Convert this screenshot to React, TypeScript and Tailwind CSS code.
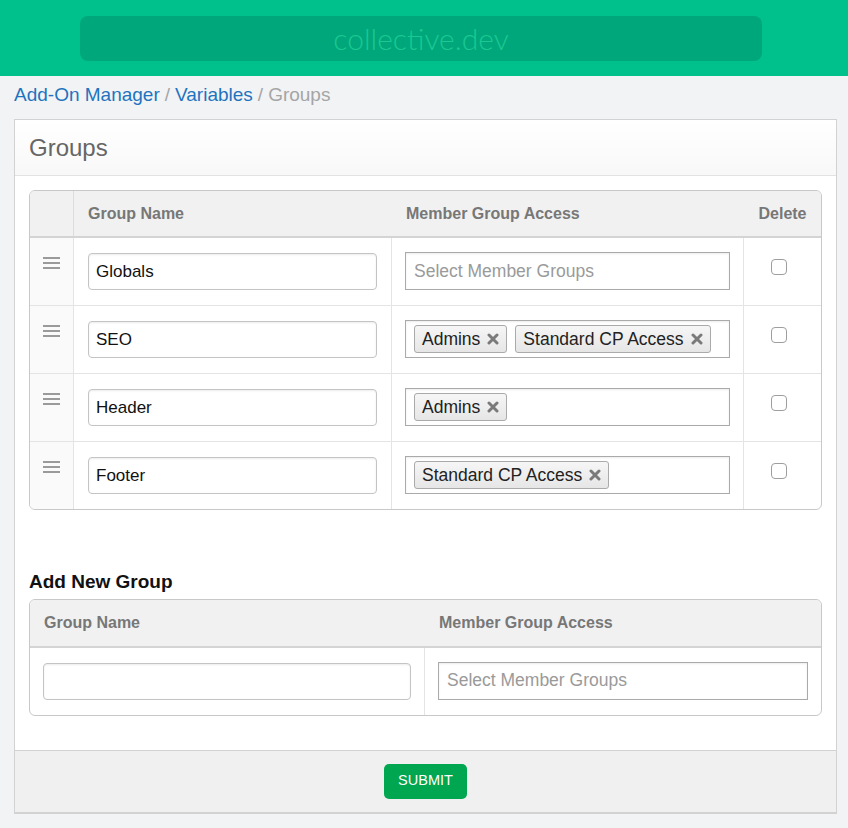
import React from "react";

const font = { fontFamily: '"Liberation Sans", Arial, Helvetica, sans-serif' };

function DragHandle() {
  return (
    <svg width="17" height="14" viewBox="0 0 17 14" className="block">
      <rect x="0" y="1" width="17" height="2" fill="#9a9a9a" />
      <rect x="0" y="6" width="17" height="2" fill="#9a9a9a" />
      <rect x="0" y="11" width="17" height="2" fill="#9a9a9a" />
    </svg>
  );
}

function Tag({ label }: { label: string }) {
  return (
    <span className="flex h-[28px] items-center gap-[7px] rounded-[3px] border border-[#aaaaaa] bg-gradient-to-b from-[#f6f6f6] to-[#e6e6e6] px-[7px] text-[17.5px] text-[#222]">
      {label}
      <svg width="12" height="12" viewBox="0 0 12 12" className="block">
        <path d="M2 2 L10 10 M10 2 L2 10" stroke="#7a7a7a" strokeWidth="3" strokeLinecap="round" />
      </svg>
    </span>
  );
}

function Checkbox() {
  return <span className="block h-[16px] w-[16px] rounded-[4px] border border-[#9e9e9e] bg-white" />;
}

function NameInput({ value }: { value: string }) {
  return (
    <div className="flex h-[37px] items-center rounded-[4px] border border-[#c4c4c4] bg-white px-[7px] text-[17px] text-[#111] shadow-[inset_0_1px_2px_rgba(0,0,0,0.08)]">
      {value}
    </div>
  );
}

function MemberSelect({ tags }: { tags: string[] }) {
  return (
    <div className="flex h-[38px] items-center gap-[8px] border border-[#aaaaaa] bg-white px-[8px] shadow-[inset_0_1px_2px_rgba(0,0,0,0.08)]">
      {tags.length === 0 ? (
        <span className="text-[17.5px] text-[#9a9a9a]">Select Member Groups</span>
      ) : (
        tags.map((t) => <Tag key={t} label={t} />)
      )}
    </div>
  );
}

const rows = [
  { name: "Globals", tags: [] as string[] },
  { name: "SEO", tags: ["Admins", "Standard CP Access"] },
  { name: "Header", tags: ["Admins"] },
  { name: "Footer", tags: ["Standard CP Access"] },
];

export default function App() {
  return (
    <div className="min-h-[828px] bg-[#f2f3f5]" style={font}>
      {/* top bar */}
      <div className="flex h-[76px] items-center bg-[#00c08b] pl-[80px]">
        <div
          className="flex h-[45px] w-[682px] items-center justify-center rounded-[8px] bg-[#00a77a] text-[30px] text-[#1bc893]"
          style={{ fontFamily: '"Lato", "Open Sans", sans-serif', fontWeight: 300 }}
        >
          collective.dev
        </div>
      </div>

      {/* breadcrumb */}
      <div className="flex h-[39px] items-center px-[14px] text-[19px] text-[#a5a5a5]">
        <span className="text-[#1f73bf]">Add-On Manager</span>
        <span className="px-[5px]">/</span>
        <span className="text-[#1f73bf]">Variables</span>
        <span className="px-[5px]">/</span>
        <span>Groups</span>
      </div>

      {/* panel */}
      <div className="ml-[14px] mt-[4px] w-[823px] border border-b-2 border-[#d2d2d2] bg-white">
        <div className="flex h-[56px] items-center border-b border-[#e2e2e2] bg-gradient-to-b from-white to-[#f8f8f8] px-[14px] text-[24px] text-[#666]">
          Groups
        </div>

        <div className="px-[14px] pb-[34px] pt-[14px]">
          {/* groups table */}
          <div className="overflow-hidden rounded-[6px] border border-[#c8c8c8]">
            <div className="grid h-[47px] grid-cols-[44px_318px_352px_1fr] border-b-2 border-[#d4d4d4] bg-[#f1f1f1] text-[16px] font-bold text-[#777]">
              <div className="border-r border-[#dcdcdc]" />
              <div className="flex items-center px-[14px]">Group Name</div>
              <div className="flex items-center px-[14px]">Member Group Access</div>
              <div className="flex items-center justify-center">Delete</div>
            </div>
            {rows.map((r, i) => (
              <div
                key={r.name}
                className={`grid grid-cols-[44px_318px_352px_1fr] ${i < rows.length - 1 ? "border-b border-[#e4e4e4]" : ""}`}
              >
                <div className="flex justify-center border-r border-[#e4e4e4] bg-[#fafafa] pt-[18px]">
                  <DragHandle />
                </div>
                <div className="border-r border-[#e4e4e4] px-[14px] py-[15px]">
                  <NameInput value={r.name} />
                </div>
                <div className="border-r border-[#e4e4e4] px-[13px] py-[14px]">
                  <MemberSelect tags={r.tags} />
                </div>
                <div className="flex justify-center pr-[8px] pt-[21px]">
                  <Checkbox />
                </div>
              </div>
            ))}
          </div>

          {/* add new group */}
          <div className="mb-[2px] mt-[58px] text-[19px] font-bold text-[#111]">Add New Group</div>
          <div className="overflow-hidden rounded-[6px] border border-[#c8c8c8]">
            <div className="grid h-[48px] grid-cols-[395px_1fr] border-b-2 border-[#d4d4d4] bg-[#f1f1f1] text-[16px] font-bold text-[#777]">
              <div className="flex items-center px-[14px]">Group Name</div>
              <div className="flex items-center px-[14px]">Member Group Access</div>
            </div>
            <div className="grid grid-cols-[395px_1fr]">
              <div className="border-r border-[#e4e4e4] px-[13px] py-[15px]">
                <NameInput value="" />
              </div>
              <div className="px-[13px] py-[14px]">
                <MemberSelect tags={[]} />
              </div>
            </div>
          </div>
        </div>

        {/* footer */}
        <div className="flex h-[62px] items-center justify-center border-t border-[#d2d2d2] bg-[#f0f0f0]">
          <button className="h-[35px] rounded-[5px] bg-[#00a650] px-[14px] text-[14.5px] uppercase text-white">
            Submit
          </button>
        </div>
      </div>
    </div>
  );
}
